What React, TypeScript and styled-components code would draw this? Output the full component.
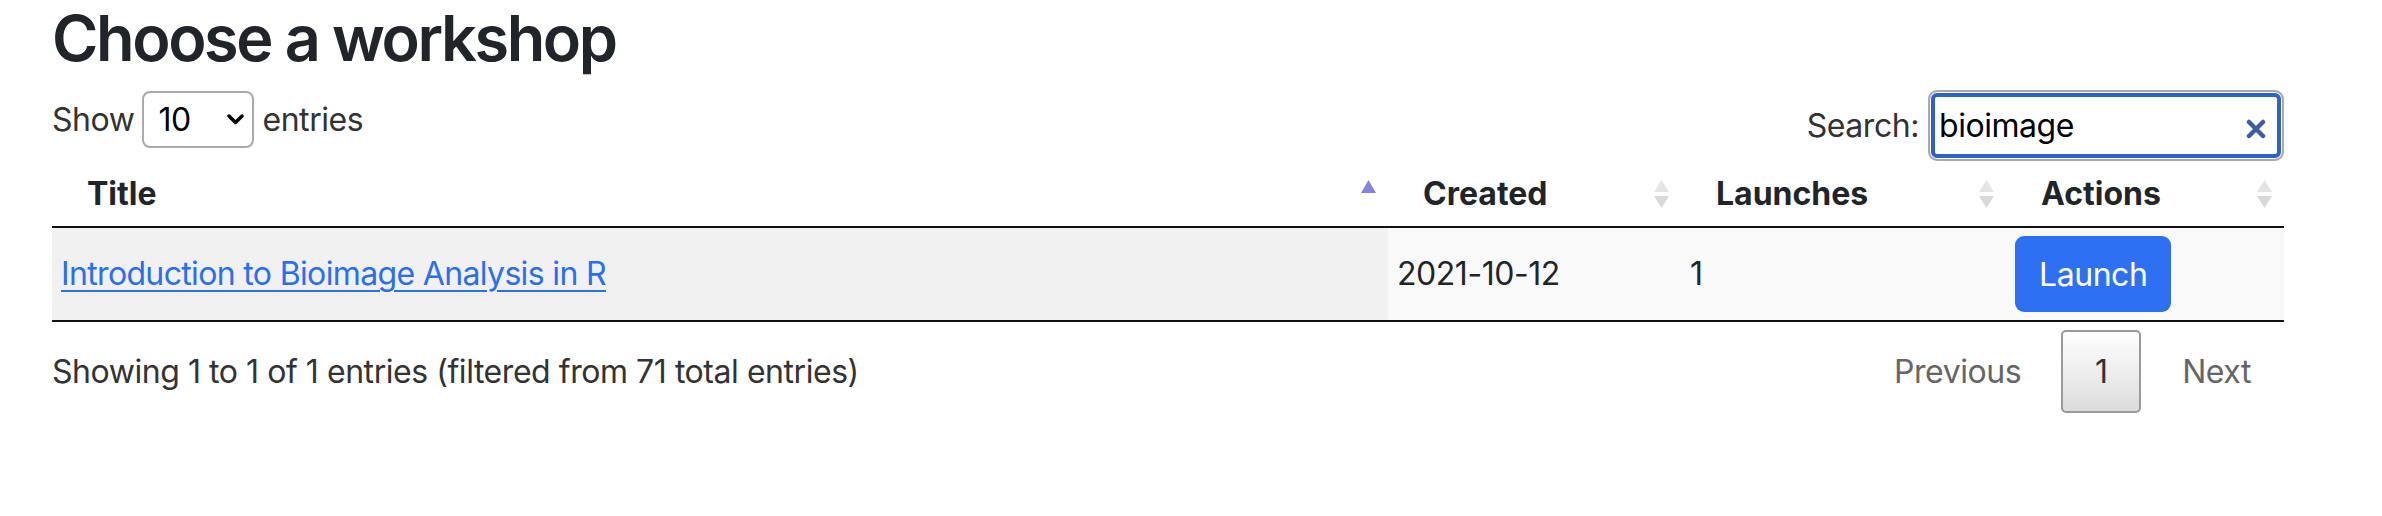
import styled, { createGlobalStyle } from 'styled-components'

const GlobalStyle = createGlobalStyle`
    html, body {
        margin: 0;
        padding: 0;
        background: #fff;
    }
    body {
        font-family: 'Inter', 'Liberation Sans', sans-serif;
        color: #212529;
        letter-spacing: -0.45px;
    }
`
const Page = styled.div`
    width: 2232px;
    padding-left: 52px;
`
const H1 = styled.h1`
    margin: 0;
    padding-top: 5px;
    font-size: 63px;
    line-height: 66px;
    font-weight: 600;
    letter-spacing: -2.4px;
    color: #212529;
`
const Controls = styled.div`
    display: flex;
    justify-content: space-between;
    align-items: flex-start;
    margin-top: 19px;
`
const Length = styled.label`
    display: flex;
    align-items: center;
    gap: 8px;
    margin-top: 1px;
    font-size: 32px;
    line-height: 48px;
    color: #333;
`
const SelectWrap = styled.span`
    position: relative;
    display: inline-block;
`
const Select = styled.select`
    appearance: none;
    box-sizing: border-box;
    width: 112px;
    height: 57px;
    padding: 0 0 0 14px;
    border: 2px solid #aaa;
    border-radius: 8px;
    background: #fff;
    font-family: 'Inter', 'Liberation Sans', sans-serif;
    font-size: 32px;
    letter-spacing: -0.45px;
    color: #000;
`
const Chevron = styled.svg`
    position: absolute;
    right: 10px;
    top: 23px;
    pointer-events: none;
`
const Search = styled.label`
    display: flex;
    align-items: center;
    gap: 9px;
    font-size: 32px;
    line-height: 48px;
    color: #333;
`
const InputWrap = styled.span`
    position: relative;
    display: inline-block;
`
const Input = styled.input`
    box-sizing: border-box;
    width: 356px;
    height: 71px;
    padding: 0 50px 0 9px;
    border: 2px solid #aaa;
    border-radius: 9px;
    outline: none;
    box-shadow: inset 0 0 0 1px #fff, inset 0 0 0 5px #2b63c9;
    font-family: 'Inter', 'Liberation Sans', sans-serif;
    font-size: 32px;
    letter-spacing: -0.45px;
    color: #000;
`
const Clear = styled.svg`
    position: absolute;
    right: 18px;
    top: 29px;
`
const Table = styled.table`
    width: 2232px;
    margin-top: 1px;
    border-collapse: collapse;
    border-bottom: 2px solid #111;
`
const Th = styled.th<{ $w: number }>`
    width: ${(p) => p.$w}px;
    box-sizing: border-box;
    padding: 8px 11px 8px 35px;
    border-bottom: 2px solid #111;
    font-size: 32px;
    line-height: 48px;
    font-weight: 700;
    letter-spacing: 0;
    text-align: left;
    color: #212529;
`
const ThInner = styled.div`
    display: flex;
    justify-content: space-between;
    align-items: center;
`
const Td = styled.td<{ $sorted?: boolean }>`
    padding: 8px 9px;
    font-size: 32px;
    line-height: 48px;
    color: #212529;
    background: ${(p) => (p.$sorted ? '#f1f1f1' : '#f9f9f9')};
    vertical-align: middle;
`
const Link = styled.a`
    color: #2a6ef2;
    letter-spacing: -0.65px;
    text-decoration: underline;
    text-decoration-thickness: 2px;
    text-underline-offset: 5px;
`
const LaunchButton = styled.button`
    box-sizing: border-box;
    height: 76px;
    padding: 0 24px;
    border: none;
    border-radius: 9px;
    background: #2d70f2;
    color: #fff;
    font-family: 'Inter', 'Liberation Sans', sans-serif;
    font-size: 32px;
    letter-spacing: -0.45px;
    cursor: pointer;
`
const Footer = styled.div`
    display: flex;
    justify-content: space-between;
    align-items: center;
    margin-top: 8px;
`
const Info = styled.div`
    font-size: 32px;
    line-height: 48px;
    color: #333;
`
const Pagination = styled.div`
    display: flex;
    align-items: center;
    gap: 2px;
`
const PageLink = styled.span`
    padding: 0 39px;
    font-size: 32px;
    line-height: 48px;
    color: #666;
    &:first-child {
        padding-left: 0;
        padding-right: 38px;
    }
    &:last-child {
        padding-right: 33px;
    }
`
const PageCurrent = styled.span`
    box-sizing: border-box;
    display: flex;
    align-items: center;
    justify-content: center;
    width: 80px;
    height: 83px;
    border: 2px solid #9a9a9a;
    border-radius: 5px;
    background: linear-gradient(to bottom, #fff 0%, #dcdcdc 100%);
    font-size: 32px;
    color: #333;
`

function SortIcon({ dir }: { dir?: 'asc' }) {
    return (
        <svg width="17" height="30" viewBox="0 0 17 30">
            {dir === 'asc' ? (
                <polygon points="8.5,1 16,14 1,14" fill="#8287dc" />
            ) : (
                <>
                    <polygon points="8.5,1 16,13 1,13" fill="#e4e4e4" />
                    <polygon points="1,17 16,17 8.5,29" fill="#d9d9d9" />
                </>
            )}
        </svg>
    )
}

const columns = [
    { title: 'Title', width: 1336, dir: 'asc' as const },
    { title: 'Created', width: 293 },
    { title: 'Launches', width: 325 },
    { title: 'Actions', width: 278 },
]

export default function App() {
    return (
        <>
            <GlobalStyle />
            <Page>
                <H1>Choose a workshop</H1>
                <Controls>
                    <Length>
                        Show
                        <SelectWrap>
                            <Select defaultValue="10">
                                <option value="10">10</option>
                                <option value="25">25</option>
                                <option value="50">50</option>
                                <option value="100">100</option>
                            </Select>
                            <Chevron width="17" height="11" viewBox="0 0 17 11">
                                <polyline
                                    points="2,2 8.5,8.5 15,2"
                                    fill="none"
                                    stroke="#000"
                                    strokeWidth="3.5"
                                    strokeLinecap="round"
                                    strokeLinejoin="round"
                                />
                            </Chevron>
                        </SelectWrap>
                        entries
                    </Length>
                    <Search>
                        Search:
                        <InputWrap>
                            <Input type="text" defaultValue="bioimage" />
                            <Clear width="20" height="20" viewBox="0 0 20 20">
                                <path
                                    d="M3 3 L17 17 M17 3 L3 17"
                                    stroke="#3e5d9f"
                                    strokeWidth="4.5"
                                    strokeLinecap="round"
                                />
                            </Clear>
                        </InputWrap>
                    </Search>
                </Controls>
                <Table>
                    <thead>
                        <tr>
                            {columns.map((col) => (
                                <Th key={col.title} $w={col.width}>
                                    <ThInner>
                                        <span>{col.title}</span>
                                        <SortIcon dir={col.dir} />
                                    </ThInner>
                                </Th>
                            ))}
                        </tr>
                    </thead>
                    <tbody>
                        <tr>
                            <Td $sorted>
                                <Link href="#">Introduction to Bioimage Analysis in R</Link>
                            </Td>
                            <Td>2021-10-12</Td>
                            <Td>1</Td>
                            <Td>
                                <LaunchButton>Launch</LaunchButton>
                            </Td>
                        </tr>
                    </tbody>
                </Table>
                <Footer>
                    <Info>Showing 1 to 1 of 1 entries (filtered from 71 total entries)</Info>
                    <Pagination>
                        <PageLink>Previous</PageLink>
                        <PageCurrent>1</PageCurrent>
                        <PageLink>Next</PageLink>
                    </Pagination>
                </Footer>
            </Page>
        </>
    )
}
